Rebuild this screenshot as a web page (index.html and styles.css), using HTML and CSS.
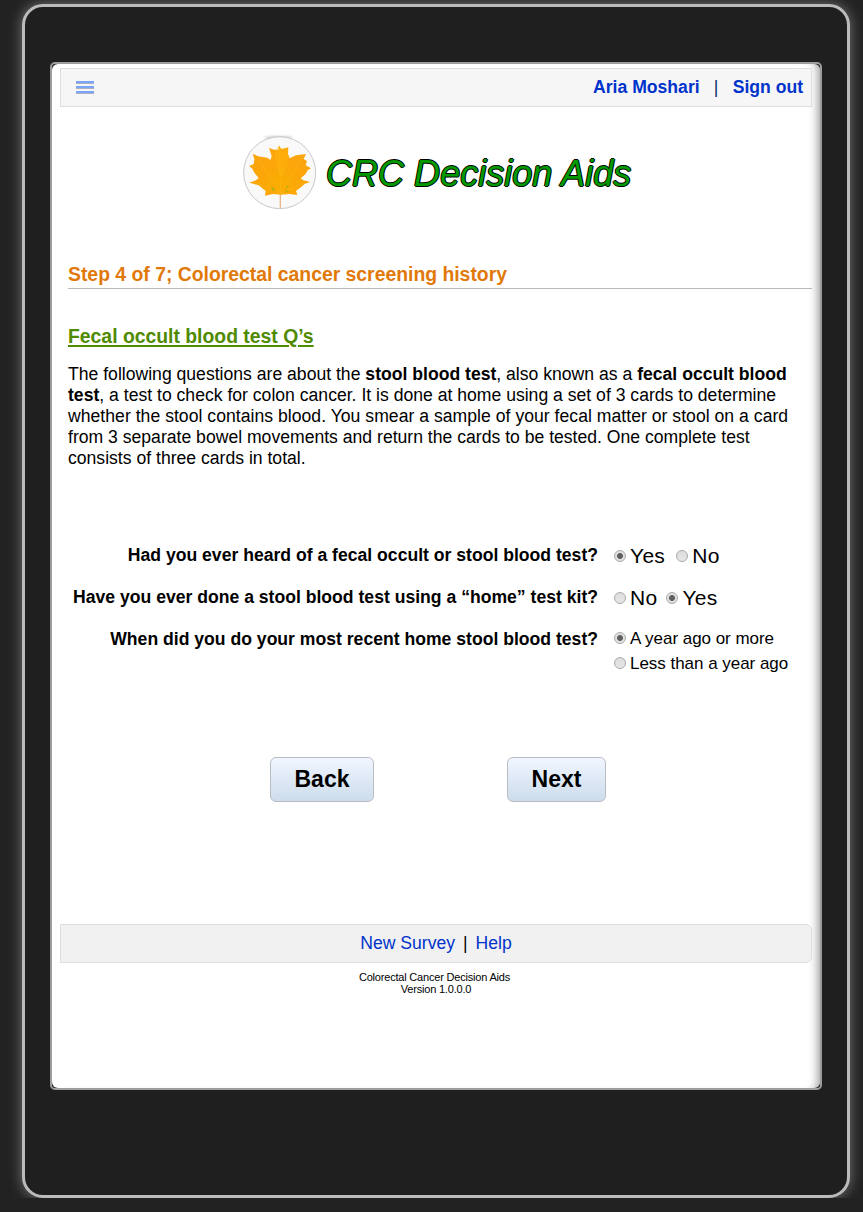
FILE: index.html
```html
<!DOCTYPE html>
<html lang="en">
<head>
<meta charset="utf-8">
<title>CRC Decision Aids</title>
<link rel="stylesheet" href="styles.css">
</head>
<body>
<div class="device">
  <div class="screen">
    <main class="page">
      <header class="topbar">
        <div class="menu"><i></i><i></i><i></i></div>
        <nav class="account"><a>Aria Moshari</a><span class="bar">|</span><a>Sign out</a></nav>
      </header>
      <div class="brand">
        <svg class="logo" width="75" height="77" viewBox="36 39 225 231">
          <defs>
            <radialGradient id="leaf" cx="50%" cy="75%" r="75%">
              <stop offset="0" stop-color="#f8ae00"/><stop offset=".45" stop-color="#fca60a"/><stop offset="1" stop-color="#fca50e"/>
            </radialGradient>
            <filter id="soft" x="-20%" y="-100%" width="140%" height="300%"><feGaussianBlur stdDeviation="3"/></filter>
          </defs>
          <ellipse cx="145" cy="53" rx="42" ry="5" fill="#ccc" filter="url(#soft)"/>
          <circle cx="149" cy="158" r="108" fill="#f9f9f9" stroke="#c8c8c8" stroke-width="3"/>
          <path d="M151 222V264" stroke="#e8b888" stroke-width="4"/>
          <path d="M147 76L154 87L175 82L174 101L179 115L187 111L198 106L228 102L221 117L231 123L227 136L243 145L233 151L227 162L212 175L220 181L241 186L225 191L210 204L198 212L202 225L178 222L152 224L128 222L105 227L107 213L97 205L86 196L58 188L79 180L86 174L73 158L67 146L57 138L71 132L73 117L68 101L84 109L112 113L121 120L125 109L117 84L133 89L145 90Z" fill="url(#leaf)"/>
          <path d="M147 78L153 89L174 84L173 101L176 130L160 165L150 170L136 123L133 91Z" fill="#ffba0c" opacity=".35"/>
          <path d="M152 223L148 85M152 220L85 118M152 220L218 108M152 220L77 187M152 220L225 188" fill="none" stroke="#ffc52b" stroke-width="2" opacity=".4"/>
          <path d="M124 200l11 6-5 4 8 6-12-5zM168 198l10 2-7 5zM164 208l12 7-7 2z" fill="#b5b010"/>
        </svg>
        <h1>CRC Decision Aids</h1>
      </div>
      <h2>Step 4 of 7; Colorectal cancer screening history</h2>
      <h3>Fecal occult blood test Q’s</h3>
      <p class="intro"><span>The following questions are about the <b>stool blood test</b>, also known as a <b>fecal occult blood</b></span>
        <span><b>test</b>, a test to check for colon cancer. It is done at home using a set of 3 cards to determine</span>
        <span class="wide">whether the stool contains blood. You smear a sample of your fecal matter or stool on a card</span>
        <span>from 3 separate bowel movements and return the cards to be tested. One complete test</span>
        <span>consists of three cards in total.</span></p>
      <form class="questions">
        <div class="row"><span class="q">Had you ever heard of a fecal occult or stool blood test?</span>
          <div class="opts"><label><i class="radio on"></i>Yes</label><label><i class="radio"></i>No</label></div></div>
        <div class="row"><span class="q">Have you ever done a stool blood test using a “home” test kit?</span>
          <div class="opts tight"><label><i class="radio"></i>No</label><label><i class="radio on"></i>Yes</label></div></div>
        <div class="row"><span class="q">When did you do your most recent home stool blood test?</span>
          <div class="opts stacked"><label><i class="radio on"></i>A year ago or more</label><label><i class="radio"></i>Less than a year ago</label></div></div>
      </form>
      <div class="buttons"><button class="back">Back</button><button class="next">Next</button></div>
      <footer class="footbar"><a>New Survey</a><span>|</span><a>Help</a></footer>
      <p class="version">Colorectal Cancer Decision Aids<br><span>Version 1.0.0.0</span></p>
    </main>
  </div>
</div>
</body>
</html>
```
FILE: styles.css
```css
*{box-sizing:border-box}
html{background:#222}
body{margin:0;padding:4px 13px 14px 22px;height:1212px;overflow:hidden;font-family:"Liberation Sans",Arial,sans-serif;color:#000}
.device{width:828px;height:1194px;border:3px solid #bbb;border-radius:21px;background:#1f1f1f;padding:55px 25px;box-shadow:0 0 14px #777;clip-path:inset(-4px -13px 0 -22px)}
.screen{width:772px;height:1028px;border:2px solid #9c9c9c;border-radius:5px;background:#222}
.page{height:1024px;background:#fff;border-radius:6px;padding:4px 8px 0;box-shadow:inset -10px 0 10px -8px #999}
.topbar{height:39px;border:1px solid #ddd;background:#f6f6f6;display:flex;justify-content:space-between;align-items:center;padding:0 8px 0 15px}
.menu{display:flex;flex-direction:column;gap:2px}
.menu i{width:18px;height:3px;background:#7ba5fb;border-bottom:1px solid #aab0bd}
.account{display:flex;font-size:17.6px;font-weight:bold;color:#03c}
.account .bar{width:33px;text-align:center;font-weight:normal;color:#036}
.brand{display:flex;padding:26px 0 0 182px;height:151px}
.logo{flex:none}
h1{margin:20px 0 0 9px;font:italic 36px/42px "Liberation Sans",Arial,sans-serif;letter-spacing:.03px;color:#090;white-space:nowrap;text-shadow:1px 0 #000,-1px 0 #000,0 1px #000,0 -1px #000}
h2{margin:0 0 0 8px;height:31px;padding-top:5px;border-bottom:1px solid #b9b9b9;color:#e17909;font-size:19.36px;line-height:23px;white-space:nowrap}
h3{margin:36px 0 0 8px;height:26px;color:#4f8a00;font-size:19.36px;line-height:23px;text-decoration:underline;text-decoration-thickness:2px;text-underline-offset:2px}
.intro{margin:13px 0 0 8px;font-size:17.6px;line-height:21px;white-space:nowrap}
.intro span{display:block;width:max-content}
.intro .wide{letter-spacing:.025px}
.questions{padding-top:76px;height:256px}
.row{display:flex;height:42px}
.q{width:538px;display:flex;justify-content:flex-end;font-weight:bold;font-size:17.6px;line-height:21px;white-space:nowrap}
.opts{display:flex;gap:11px;margin:-1px 0 0 16px;font-size:21px;line-height:21px}
.opts.tight{gap:9px}
.opts label{display:flex;align-items:center;gap:4px;height:23px;letter-spacing:.3px}
.opts .radio{margin-top:1px}
.opts.stacked{flex-direction:column;gap:1px;font-size:17px;margin-top:-3px}
.stacked label{flex:none;height:24px;letter-spacing:-.03px}
.opts.stacked .radio{margin-top:-1px}
.radio{flex:none;width:12px;height:12px;border:1px solid #aaa;border-radius:50%;background:linear-gradient(#ddd,#e6e6e6)}
.radio.on{background:radial-gradient(circle,#606060 0 2.6px,#e2e2e2 3.3px)}
.buttons{display:flex;padding-left:210px;gap:133px;margin-top:32px}
button{height:45px;border:1px solid #b9bcc2;border-radius:6px;background:linear-gradient(#f0f6ff,#cddcec);font:bold 23px/40px "Liberation Sans",Arial,sans-serif;padding:0 0 2px;color:#000}
.back{width:104px}.next{width:99px}
.footbar{margin-top:122px;height:39px;border:1px solid #ddd;border-radius:0 6px 6px 0;background:#f1f1f1;display:flex;justify-content:center;align-items:center;gap:8px;font-size:17.6px}
.footbar a{color:#03c}
.version{margin:8px 3px 0 0;text-align:center;font-size:11px;line-height:12px;letter-spacing:-.19px}
.version span{padding-left:3px}
```
